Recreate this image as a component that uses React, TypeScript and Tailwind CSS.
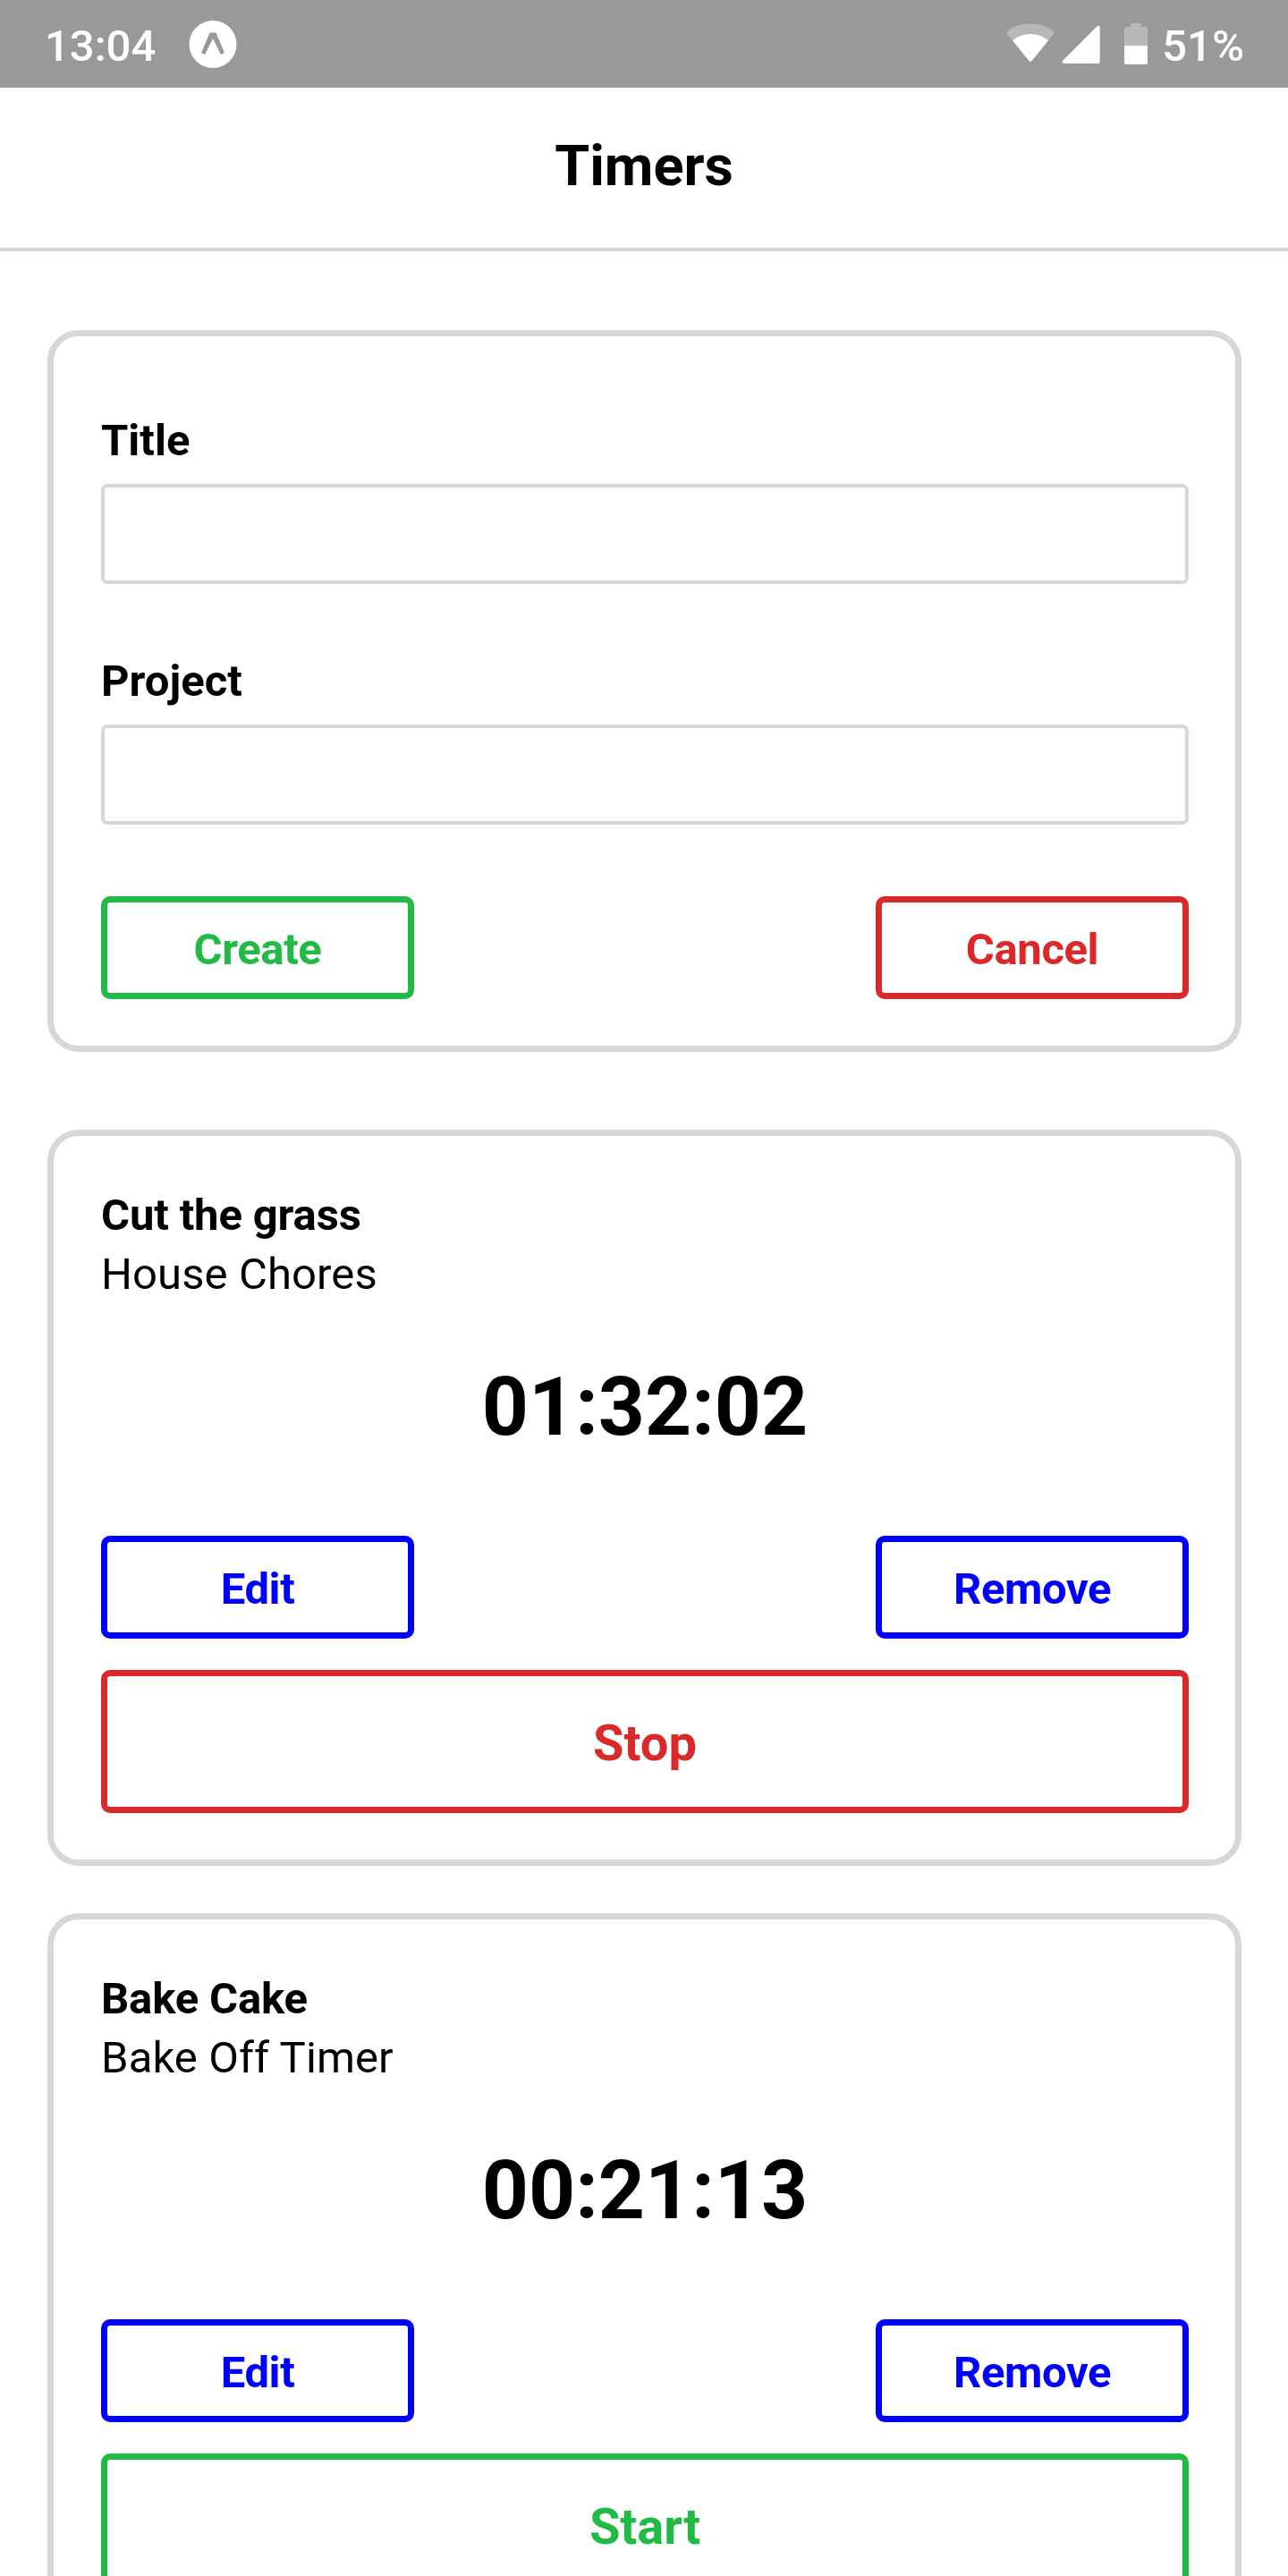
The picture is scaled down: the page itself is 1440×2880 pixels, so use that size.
import type { ReactNode } from "react";

const tones = {
  green: "border-[#21ba45] text-[#21ba45]",
  red: "border-[#db2828] text-[#db2828]",
  blue: "border-[#0000ff] text-[#0000ff]",
};

type Tone = keyof typeof tones;

function Button({ tone, large = false, children }: { tone: Tone; large?: boolean; children: ReactNode }) {
  const size = large ? "h-[160px] w-full text-[56px]" : "h-[115px] w-[350px] text-[49px] tracking-[-0.4px]";
  return (
    <button
      type="button"
      className={`flex items-center justify-center rounded-[10px] border-[7px] leading-none font-bold ${size} ${tones[tone]}`}
    >
      <span className="block pt-[4px]">{children}</span>
    </button>
  );
}

function Card({ className, children }: { className: string; children: ReactNode }) {
  return (
    <section className={`mr-[52px] ml-[53px] shrink-0 rounded-[35px] border-[7px] border-[#d6d7da] pr-[52px] pl-[53px] ${className}`}>
      {children}
    </section>
  );
}

function Field({ label }: { label: string }) {
  return (
    <label className="block">
      <span className="block h-[82px] text-[49px] leading-[68px] font-bold">{label}</span>
      <input className="block h-[112px] w-full rounded-[7px] border-4 border-[#d6d7da] px-4 text-[42px] outline-none" />
    </label>
  );
}

function TimerForm() {
  return (
    <Card className="mt-[88px] h-[807px] pt-[83px]">
      <div className="flex flex-col gap-[75px]">
        <Field label="Title" />
        <Field label="Project" />
      </div>
      <div className="mt-[80px] flex justify-between">
        <Button tone="green">Create</Button>
        <Button tone="red">Cancel</Button>
      </div>
    </Card>
  );
}

function Timer({ title, project, elapsed, running, className }: {
  title: string;
  project: string;
  elapsed: string;
  running: boolean;
  className: string;
}) {
  return (
    <Card className={`h-[823px] pt-[56px] ${className}`}>
      <h2 className="text-[49px] leading-[66px] font-bold tracking-[-0.15px]">{title}</h2>
      <p className="text-[49px] leading-[66px] tracking-[0.1px]">{project}</p>
      <div className="mt-[62px] h-[107px] text-center text-[91px] leading-[107px] font-bold">{elapsed}</div>
      <div className="mt-[90px] flex justify-between">
        <Button tone="blue">Edit</Button>
        <Button tone="blue">Remove</Button>
      </div>
      <div className="mt-[35px]">
        <Button tone={running ? "red" : "green"} large>
          {running ? "Stop" : "Start"}
        </Button>
      </div>
    </Card>
  );
}

function StatusBar() {
  return (
    <div className="flex h-[98px] shrink-0 items-center bg-[#999999] pr-[49px] pl-[50px] text-[49px] leading-[92px] font-medium text-white">
      <span className="pt-[6px]">13:04</span>
      <svg className="ml-[37px]" width="54" height="54" viewBox="0 0 54 54">
        <circle cx="27" cy="27.5" r="26.5" fill="white" />
        <path
          d="M23.500 14.500h7l9.500 22.500-4.200 2L27 21 18.200 39 14 37Z"
          fill="#999999"
        />
      </svg>
      <svg className="ml-auto" width="160" height="98" viewBox="0 0 160 98">
        <path d="M1.500 38.500Q-.5 36 2 34.200Q12 26.500 27 26.500T52.300 34.200Q54.500 36 52.800 38.500L29 67.500Q27 70 25 67.500Z" fill="white" fillOpacity="0.3" />
        <path d="M7 45.300Q15.500 38 27 38T47 45.300L29 67.500Q27 70 25 67.500Z" fill="white" />
        <path d="M101.500 29.600Q104.500 27.500 104.700 31V69Q104.700 71 102.700 71H65Q61 71 63.500 67.500Z" fill="white" />
        <path d="M132 51V32.500Q132 30 134.500 30H139V26H151V30H155.500Q158 30 158 32.500V51Z" fill="white" fillOpacity="0.3" />
        <path d="M132 51H158V69.500Q158 72 155.500 72H134.500Q132 72 132 69.500Z" fill="white" />
      </svg>
      <span className="ml-[14px] pt-[6px]">51%</span>
    </div>
  );
}

export default function App() {
  return (
    <div className="flex h-[2880px] w-[1440px] flex-col overflow-hidden bg-white font-[Roboto,sans-serif] text-black">
      <StatusBar />
      <header className="flex h-[183px] shrink-0 justify-center border-b-4 border-[#d6d4db] pt-[51px]">
        <h1 className="text-[63px] leading-[74px] font-bold">Timers</h1>
      </header>
      <TimerForm />
      <Timer className="mt-[87px]" title="Cut the grass" project="House Chores" elapsed="01:32:02" running />
      <Timer className="mt-[53px]" title="Bake Cake" project="Bake Off Timer" elapsed="00:21:13" running={false} />
    </div>
  );
}
